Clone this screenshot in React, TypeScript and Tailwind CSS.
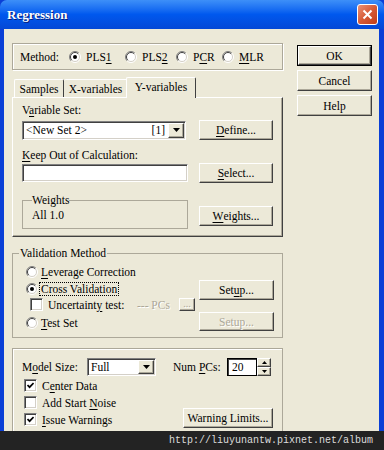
import React from 'react';

const sunken =
  'bg-white border border-t-[#808080] border-l-[#808080] border-r-white border-b-white shadow-[inset_1px_1px_0_#404040,inset_-1px_-1px_0_#d4d0c8]';
const raised =
  'bg-[#ece9d8] border border-t-white border-l-white border-r-[#404040] border-b-[#404040] shadow-[inset_-1px_-1px_0_#aca899]';

function U({ children }: { children: React.ReactNode }) {
  return <span className="underline decoration-1 underline-offset-[2px]">{children}</span>;
}

function Btn({
  children,
  className = '',
  disabled = false,
}: {
  children: React.ReactNode;
  className?: string;
  disabled?: boolean;
}) {
  return (
    <div
      className={`${raised} flex items-center justify-center shrink-0 ${
        disabled ? 'text-[#aca899] [text-shadow:1px_1px_0_#fff]' : 'text-black'
      } ${className}`}
    >
      {children}
    </div>
  );
}

function Radio({ checked = false }: { checked?: boolean }) {
  return (
    <svg width="12" height="12" viewBox="0 0 12 12" className="shrink-0">
      <circle cx="6" cy="6" r="5" fill="#fff" />
      <path d="M9.9 2.1 A5.5 5.5 0 0 0 2.1 9.9" stroke="#808080" fill="none" />
      <path d="M9.2 2.8 A4.5 4.5 0 0 0 2.8 9.2" stroke="#404040" fill="none" />
      <path d="M9.9 2.1 A5.5 5.5 0 0 1 2.1 9.9" stroke="#ffffff" fill="none" />
      <path d="M9.2 2.8 A4.5 4.5 0 0 1 2.8 9.2" stroke="#d4d0c8" fill="none" />
      {checked && <circle cx="6" cy="6" r="2" fill="#000" />}
    </svg>
  );
}

function Check({ checked = false }: { checked?: boolean }) {
  return (
    <div className={`${sunken} w-[13px] h-[13px] flex items-center justify-center shrink-0`}>
      {checked && (
        <svg width="7" height="7" viewBox="0 0 7 7">
          <path d="M0.5 3 L2.6 5.2 L6.6 1" stroke="#000" strokeWidth="1.7" fill="none" />
        </svg>
      )}
    </div>
  );
}

function DropBtn() {
  return (
    <div className={`${raised} w-[16px] h-[15px] my-[1px] mr-[1px] flex items-center justify-center shrink-0`}>
      <svg width="7" height="4" viewBox="0 0 7 4">
        <path d="M0 0 H7 L3.5 4 Z" fill="#000" />
      </svg>
    </div>
  );
}

function Opt({ w, checked = false, children }: { w: string; checked?: boolean; children: React.ReactNode }) {
  return (
    <div className={`flex items-center gap-[5px] ${w}`}>
      <Radio checked={checked} />
      <span>{children}</span>
    </div>
  );
}

export default function App() {
  return (
    <div className="relative w-[384px] h-[450px] overflow-hidden bg-[#0a3fd6] font-['Liberation_Serif',serif] text-[11.5px] leading-[12px] text-black">
      {/* title bar */}
      <div className="h-[29px] flex items-center justify-between pl-[7px] pr-[6px] rounded-t-[7px] bg-linear-to-b from-[#3d8ff8] via-[#0058ee] to-[#0448d6]">
        <span className="text-white font-bold text-[13px] [text-shadow:1px_1px_0_#0a1e78]">Regression</span>
        <div className="w-[21px] h-[21px] rounded-[3px] border border-white bg-linear-to-br from-[#eb9175] via-[#d65a36] to-[#c03c17] flex items-center justify-center">
          <svg width="11" height="11" viewBox="0 0 11 11">
            <path d="M1.5 1.5 L9.5 9.5 M9.5 1.5 L1.5 9.5" stroke="#fff" strokeWidth="2" />
          </svg>
        </div>
      </div>

      {/* body */}
      <div className="ml-[4px] mr-[5px] h-[421px] bg-[#ece9d8] flex pl-[8px] pt-[14px]">
        <div className="w-[271px] flex flex-col">
          {/* method */}
          <div className="h-[27px] border border-[#aca899] shadow-[inset_1px_1px_0_#fff,1px_1px_0_#fff] flex items-center pl-[7px] shrink-0">
            <span className="w-[49px]">Method:</span>
            <Opt w="w-[56px]" checked>
              PLS<U>1</U>
            </Opt>
            <Opt w="w-[51px]">
              PLS<U>2</U>
            </Opt>
            <Opt w="w-[46px]">
              P<U>C</U>R
            </Opt>
            <Opt w="w-[50px]">
              <U>M</U>LR
            </Opt>
          </div>

          {/* tabs */}
          <div className="mt-[7px] flex items-end h-[20px] pl-[2px] shrink-0">
            <div className="w-[50px] h-[18px] border-t border-l border-r border-t-white border-l-white border-r-[#404040] rounded-t-[2px] flex items-center justify-center">
              Samples
            </div>
            <div className="w-[64px] h-[18px] border-t border-r border-t-white border-r-[#404040] rounded-t-[2px] flex items-center justify-center">
              X-variables
            </div>
            <div className="relative z-10 -ml-[2px] -mb-px w-[70px] h-[21px] bg-[#ece9d8] border-t border-l border-r border-t-white border-l-white border-r-[#404040] rounded-t-[2px] flex items-center justify-center pb-[2px]">
              Y-variables
            </div>
          </div>
          <div className={`${raised} h-[140px] pl-[9px] pt-[6px] flex flex-col shrink-0`}>
            <span>
              V<U>a</U>riable Set:
            </span>
            <div className="flex items-center mt-[4px] h-[20px]">
              <div className="w-[177px]">
                <div className={`${sunken} w-[164px] h-[19px] flex items-center`}>
                  <span className="pl-[3px] flex-1">&lt;New Set 2&gt;</span>
                  <span className="mr-[3px]">[1]</span>
                  <DropBtn />
                </div>
              </div>
              <Btn className="w-[74px] h-[20px]">
                <U>D</U>efine...
              </Btn>
            </div>
            <span className="mt-[9px]">
              <U>K</U>eep Out of Calculation:
            </span>
            <div className="flex items-center mt-[2px] h-[20px]">
              <div className="w-[177px]">
                <div className={`${sunken} w-[166px] h-[18px]`} />
              </div>
              <Btn className="w-[74px] h-[20px]">
                <U>S</U>elect...
              </Btn>
            </div>
            <div className="flex mt-[11px]">
              <div className="w-[177px]">
                <fieldset className="w-[166px] h-[35px] border border-[#aca899] pl-[9px]">
                  <legend className="leading-[12px]">Weights</legend>
                  <div className="mt-[3px]">All 1.0</div>
                </fieldset>
              </div>
              <Btn className="mt-[12px] w-[74px] h-[20px]">
                <U>W</U>eights...
              </Btn>
            </div>
          </div>

          {/* validation */}
          <fieldset className="mt-[10px] h-[91px] border border-[#aca899] pl-[6px] flex shrink-0">
            <legend className="px-[1px] leading-[12px]">Validation Method</legend>
            <div className="w-[180px] pt-[5px] flex flex-col">
              <div className="flex items-center h-[15px] pl-[7px] gap-[3px]">
                <Radio />
                <span>
                  <U>L</U>everage Correction
                </span>
              </div>
              <div className="flex items-center h-[15px] pl-[7px] gap-[2px] mt-[2px]">
                <Radio checked />
                <span className="outline-1 outline-dotted outline-black px-[1px]">Cross Validation</span>
              </div>
              <div className="flex items-center h-[15px] pl-[11px] mt-[1px]">
                <Check />
                <span className="ml-[5px] w-[89px]">
                  Uncertaint<U>y</U> test:
                </span>
                <span className="w-[42px] text-[#aca899] [text-shadow:1px_1px_0_#fff]">--- PCs</span>
                <Btn disabled className="w-[16px] h-[13px] text-[10px] leading-[8px] items-end pb-[2px]">
                  ...
                </Btn>
              </div>
              <div className="flex items-center h-[15px] pl-[7px] gap-[3px] mt-[3px]">
                <Radio />
                <span>
                  <U>T</U>est Set
                </span>
              </div>
            </div>
            <div className="flex flex-col">
              <Btn className="mt-[21px] w-[75px] h-[20px]">
                Set<U>u</U>p...
              </Btn>
              <Btn disabled className="mt-[12px] w-[75px] h-[19px]">
                Setup...
              </Btn>
            </div>
          </fieldset>

          {/* options */}
          <div className="mt-[10px] flex-1 border border-[#aca899] shadow-[inset_1px_1px_0_#fff] pl-[9px] pt-[8px] flex flex-col">
            <div className="flex items-center h-[19px]">
              <span className="w-[65px]">
                M<U>o</U>del Size:
              </span>
              <div className={`${sunken} w-[69px] h-[18px] flex items-center`}>
                <span className="pl-[3px] flex-1">Full</span>
                <div className={`${raised} w-[16px] h-[14px] my-[1px] mr-[1px] flex items-center justify-center`}>
                  <svg width="7" height="4" viewBox="0 0 7 4">
                    <path d="M0 0 H7 L3.5 4 Z" fill="#000" />
                  </svg>
                </div>
              </div>
              <span className="ml-[17px] w-[54px]">
                Num <U>P</U>Cs:
              </span>
              <div className="w-[30px] h-[18px] bg-white border border-black shadow-[inset_1px_1px_0_#404040] flex items-center pl-[4px]">
                20
              </div>
              <div className="w-[14px] h-[18px] flex flex-col">
                <div className={`${raised} h-[9px] flex items-center justify-center`}>
                  <svg width="5" height="3" viewBox="0 0 5 3">
                    <path d="M0 3 H5 L2.5 0 Z" fill="#000" />
                  </svg>
                </div>
                <div className={`${raised} h-[9px] flex items-center justify-center`}>
                  <svg width="5" height="3" viewBox="0 0 5 3">
                    <path d="M0 0 H5 L2.5 3 Z" fill="#000" />
                  </svg>
                </div>
              </div>
            </div>
            <div className="flex items-end mt-[1px]">
              <div className="w-[161px] flex flex-col">
                <div className="flex items-center h-[17px] pl-[2px] gap-[5px]">
                  <Check checked />
                  <span>
                    C<U>e</U>nter Data
                  </span>
                </div>
                <div className="flex items-center h-[17px] pl-[2px] gap-[5px]">
                  <Check />
                  <span>
                    Add Start <U>N</U>oise
                  </span>
                </div>
                <div className="flex items-center h-[17px] pl-[2px] gap-[5px]">
                  <Check checked />
                  <span>
                    <U>I</U>ssue Warnings
                  </span>
                </div>
              </div>
              <Btn className="w-[90px] h-[20px]">Warning Limits...</Btn>
            </div>
          </div>
        </div>

        {/* dialog buttons */}
        <div className="ml-[14px] mt-[2px] w-[75px] flex flex-col gap-[4px]">
          <div className="border border-black h-[21px] flex">
            <Btn className="flex-1 h-full">OK</Btn>
          </div>
          <Btn className="h-[21px]">Cancel</Btn>
          <Btn className="h-[21px]">Help</Btn>
        </div>
      </div>

      {/* watermark */}
      <div className="absolute left-0 right-0 bottom-0 h-[19px] bg-[#232323] flex items-center justify-end pr-[11px] font-['Liberation_Mono',monospace] text-[10px] text-[#dcdcdc]">
        http://liuyunantw.pixnet.net/album
      </div>
    </div>
  );
}
